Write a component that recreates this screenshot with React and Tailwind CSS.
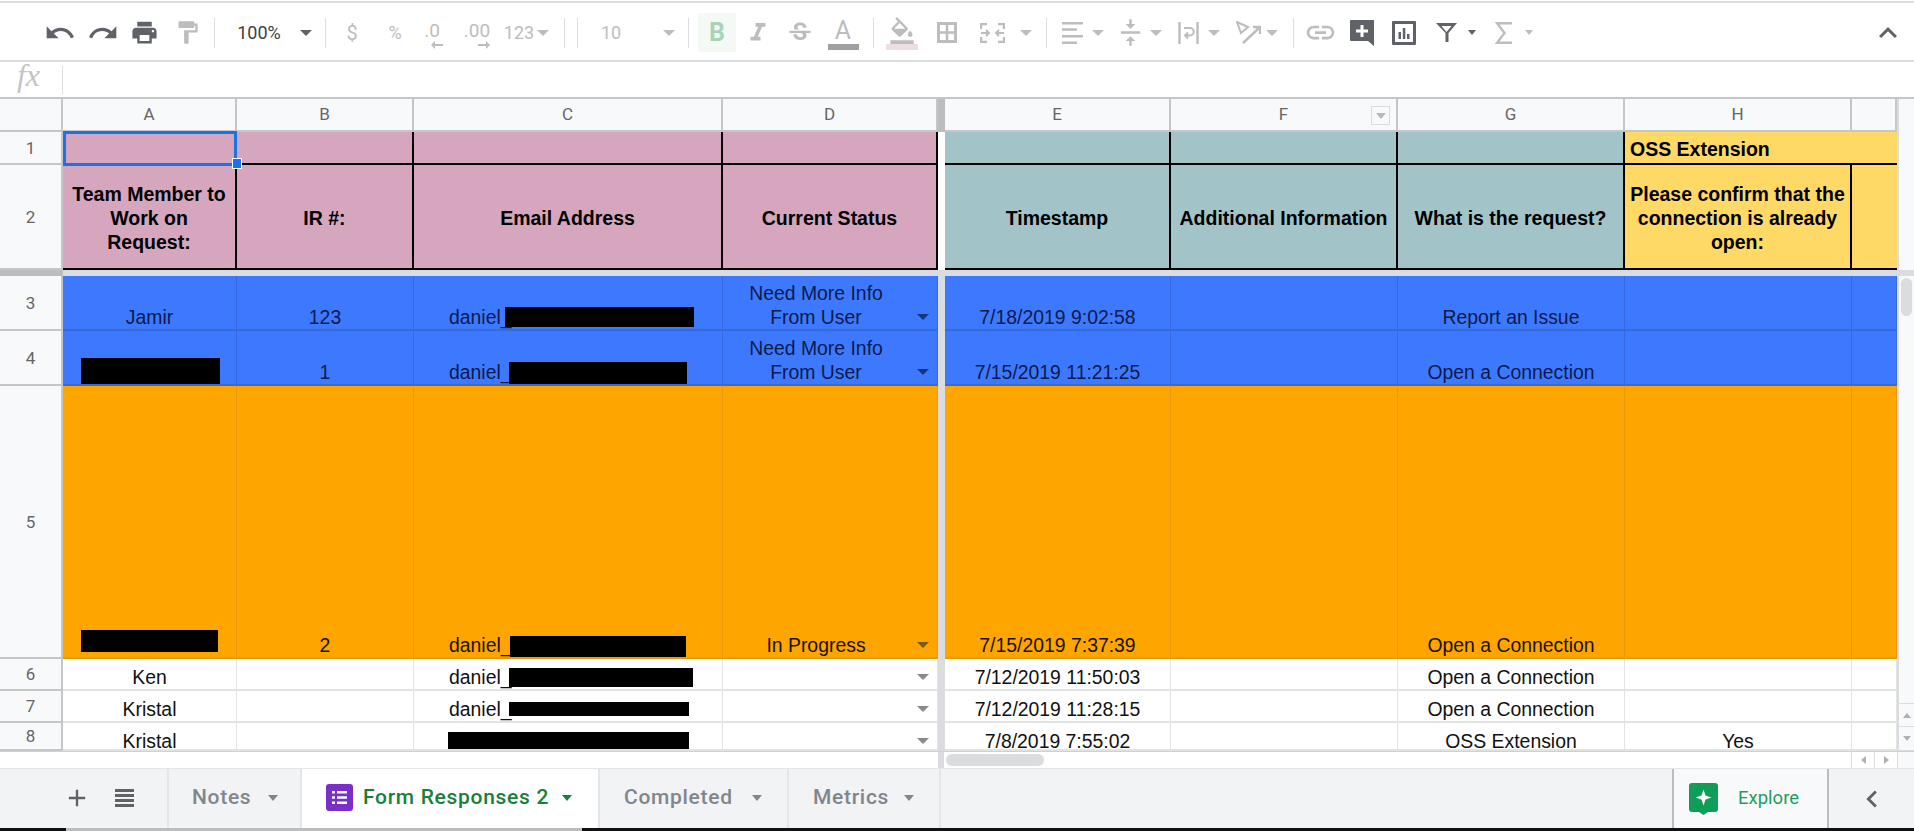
import React from 'react'
import {
  MdUndo, MdRedo, MdPrint, MdFormatPaint, MdFormatItalic, MdStrikethroughS, MdFormatColorFill,
  MdVerticalAlignCenter, MdLink, MdKeyboardArrowUp, MdAdd, MdChevronLeft,
} from 'react-icons/md'

const sq = 'flex items-center justify-center'

function Caret({ color = '#bdbdbd', size = 'border-x-[6px] border-t-[6px]' }) {
  return <span className={`inline-block w-0 h-0 border-x-transparent ${size}`} style={{ borderTopColor: color }} />
}

function Sep() {
  return <div className="w-px h-[30px] bg-[#dadce0]" />
}

function Arrow({ flip }) {
  return (
    <svg width="12" height="8" viewBox="0 0 12 8" className={flip ? 'rotate-180' : ''} fill="#bdbdbd">
      <path d="M0 4l4-4v3h8v2H4v3z" />
    </svg>
  )
}

function Head({ label, children }) {
  return (
    <div className={`relative ${sq} bg-[#f8f9fa] border-r-2 border-b-2 border-[#c4c6c8] text-[#666] text-[17px] font-['Roboto']`}>
      {label}
      {children}
    </div>
  )
}

function RowNum({ n }) {
  return <div className={`${sq} pt-[2px] bg-[#f8f9fa] border-r-2 border-b-2 border-[#c4c6c8] text-[#666] text-[17px] font-['Roboto']`}>{n}</div>
}

function HeaderCell({ bg, children }) {
  return (
    <div className={`${bg} border-r-2 border-b-2 border-black ${sq} pt-[2px] text-center font-bold text-[19.5px] leading-6 text-black`}>
      {children}
    </div>
  )
}

function Redact({ className }) {
  return <span className={`absolute bg-black ${className}`} />
}

const themes = {
  blue: { cell: 'bg-[#3d79ff] border-[#3669de] text-[#0c1a4d] items-end', caret: '#17357f' },
  orange: { cell: 'bg-[#ffa500] border-[#e69a0c] text-[#1a1200] items-end', caret: '#7a5a1c' },
  white: { cell: 'bg-white border-[#e2e3e3] text-[#111] items-start pt-[6px]', caret: '#8a8a8a' },
}

function DataRow({ n, theme, a, b, c, d, e, g, h, redactA, redactC, caretTop = 'self-end h-6' }) {
  const t = themes[theme]
  const cell = `relative flex justify-center text-center border-r border-b-2 text-[19.4px] leading-6 overflow-hidden ${t.cell}`
  return (
    <>
      <RowNum n={n} />
      <div className={cell}>{a}{redactA && <Redact className={redactA} />}</div>
      <div className={cell}>{b}</div>
      <div className={`${cell} !justify-start pl-[35px]`}>{c}{redactC && <Redact className={redactC} />}</div>
      <div className={`${cell} !justify-start`}>
        <span className="w-[186px]">{d}</span>
        <span className={`w-[28px] ${sq} ${caretTop}`}><Caret color={t.caret} /></span>
      </div>
      <div className="bg-[#dadce0]" />
      <div className={cell}>{e}</div>
      <div className={cell} />
      <div className={cell}>{g}</div>
      <div className={cell}>{h}</div>
      <div className={cell} />
    </>
  )
}

function Tab({ label, w, pl, gap }) {
  return (
    <div className={`${w} ${pl} ${gap} h-full flex items-center pb-[2px] border-r-2 border-[#e3e5e8] text-[21px] font-medium tracking-[0.7px] text-[#80868b] font-['Roboto']`}>
      {label}
      <Caret color="#80868b" size="border-x-[5px] border-t-[6px]" />
    </div>
  )
}

export default function App() {
  return (
    <div className="w-[1914px] h-[831px] overflow-hidden bg-white flex flex-col font-['Liberation_Sans',Arial,sans-serif]">
      <div className="h-px bg-white" />
      <div className="h-[2px] bg-[#dadce0]" />

      {/* toolbar */}
      <div className="h-[57px] flex items-center pl-[39px] pt-[2px] text-[#bdbdbd]">
        <div className={`w-[42px] ${sq} text-[#5f6368]`}><MdUndo size={32} /></div>
        <div className={`w-[43px] ${sq} text-[#5f6368]`}><MdRedo size={32} /></div>
        <div className={`w-[40px] ${sq} text-[#5f6368]`}><MdPrint size={29} /></div>
        <div className={`w-[46px] ${sq}`}><MdFormatPaint size={27} /></div>
        <div className="w-[4px]" />
        <Sep />
        <div className="w-[85px] pl-[3px] text-center text-[18px] text-[#3c4043] font-['Roboto']">100%</div>
        <div className={`w-[12px] ${sq}`}><Caret color="#5f6368" /></div>
        <div className="w-[13px]" />
        <Sep />
        <div className="w-[52px] text-center text-[20px] font-['Roboto']">$</div>
        <div className="w-[34px] text-center text-[18px] font-['Roboto']">%</div>
        <div className="w-[40px] flex flex-col items-center text-[19px] leading-[20px] font-['Roboto'] pt-[5px]">
          <span>.0</span>
          <span className="pl-[10px] h-[8px] flex"><Arrow /></span>
        </div>
        <div className="w-[50px] flex flex-col items-center text-[19px] leading-[20px] font-['Roboto'] pt-[5px]">
          <span>.00</span>
          <span className="pl-[14px] h-[8px] flex"><Arrow flip /></span>
        </div>
        <div className="w-[34px] text-center text-[18px] font-['Roboto']">123</div>
        <div className={`w-[14px] ${sq}`}><Caret /></div>
        <div className="w-[14px]" />
        <Sep />
        <div className="w-[12px]" />
        <Sep />
        <div className="w-[66px] text-center text-[18px] font-['Roboto']">10</div>
        <div className="w-[19px]" />
        <div className={`w-[12px] ${sq}`}><Caret /></div>
        <div className="w-[13px]" />
        <Sep />
        <div className="w-[9px]" />
        <div className={`w-[38px] h-[39px] bg-[#f4f9f5] ${sq} text-[#a8d5b5] text-[25px] font-bold font-['Roboto']`}>B</div>
        <div className={`w-[44px] ${sq}`}><MdFormatItalic size={30} /></div>
        <div className={`w-[40px] ${sq}`}><MdStrikethroughS size={28} /></div>
        <div className="w-[46px] flex flex-col items-center mt-[3px]">
          <span className="text-[25px] leading-[26px] font-['Roboto']">A</span>
          <span className="w-[31px] h-[6px] bg-[#a0a0a0]" />
        </div>
        <div className="w-[7px]" />
        <Sep />
        <div className="w-[56px] flex flex-col items-center mt-[3px]">
          <span className="h-[26px] flex items-center"><MdFormatColorFill size={28} /></span>
          <span className="w-[32px] h-[6px] bg-[#eedde4]" />
        </div>
        <div className={`w-[34px] ${sq}`}>
          <svg width="20" height="21" viewBox="0 0 20 21" fill="none" stroke="#bdbdbd" strokeWidth="3">
            <rect x="1.5" y="1.5" width="17" height="18" />
            <path d="M10 1v19M1 10.5h18" strokeWidth="2.5" />
          </svg>
        </div>
        <div className={`w-[56px] ${sq}`}>
          <svg width="25" height="20" viewBox="0 0 25 20" fill="none" stroke="#bdbdbd" strokeWidth="2.4">
            <path d="M1 6V1h6M18 1h6v5M1 14v5h6M18 19h6v-5" />
            <path d="M1 10h8M6 7l3 3-3 3M24 10h-8M19 7l-3 3 3 3" strokeWidth="2" />
          </svg>
        </div>
        <div className={`w-[12px] ${sq}`}><Caret /></div>
        <div className="w-[14px]" />
        <Sep />
        <div className="w-[5px]" />
        <div className={`w-[40px] ${sq}`}>
          <svg width="21" height="22" viewBox="0 0 21 22" fill="#bdbdbd">
            <path d="M0 0h21v2.6H0zM0 6.2h15v2.6H0zM0 13h21v2.6H0zM0 19.4h15V22H0z" />
          </svg>
        </div>
        <div className={`w-[12px] ${sq}`}><Caret /></div>
        <div className="w-[6px]" />
        <div className={`w-[40px] ${sq}`}><MdVerticalAlignCenter size={29} /></div>
        <div className={`w-[12px] ${sq}`}><Caret /></div>
        <div className="w-[6px]" />
        <div className={`w-[40px] ${sq}`}>
          <svg width="21" height="22" viewBox="0 0 21 22" fill="none" stroke="#bdbdbd" strokeWidth="2.4">
            <path d="M1.5 0v22M19.5 0v22" />
            <path d="M6 6h6a3 3 0 0 1 0 7.5H7.5M10 10.5l-3 3 3 3" strokeWidth="2" />
          </svg>
        </div>
        <div className={`w-[12px] ${sq}`}><Caret /></div>
        <div className="w-[10px]" />
        <div className={`w-[36px] ${sq}`}>
          <svg width="25" height="23" viewBox="0 0 25 23" fill="none" stroke="#bdbdbd" strokeWidth="2">
            <path d="M1 1l11 5-7 6z" />
            <path d="M7 22L23 7M17 6h7v7" strokeWidth="2.4" />
          </svg>
        </div>
        <div className={`w-[12px] ${sq}`}><Caret /></div>
        <div className="w-[15px]" />
        <Sep />
        <div className={`w-[52px] ${sq}`}><MdLink size={33} /></div>
        <div className={`w-[32px] ${sq}`}>
          <svg width="24" height="26" viewBox="0 0 24 26" fill="#5f6368">
            <path d="M1 0h23v26l-6-5H1a1 1 0 0 1-1-1V1a1 1 0 0 1 1-1z" />
            <path d="M10.5 5h3v4.500h4.500v3h-4.500V17h-3v-4.500H6v-3h4.500z" fill="#fff" />
          </svg>
        </div>
        <div className={`w-[52px] ${sq}`}>
          <svg width="24" height="24" viewBox="0 0 24 24" fill="#5f6368">
            <path fillRule="evenodd" d="M1 0h22a1 1 0 0 1 1 1v22a1 1 0 0 1-1 1H1a1 1 0 0 1-1-1V1a1 1 0 0 1 1-1zm2 3v18h18V3z" />
            <path d="M6.500 11h2.500v7H6.500zM10.800 7h2.500v11h-2.500zM15 13h2.500v5H15z" />
          </svg>
        </div>
        <div className={`w-[32px] ${sq}`}>
          <svg width="21" height="19" viewBox="0 0 21 19" fill="#5f6368">
            <path fillRule="evenodd" d="M0 0h21l-8.500 10v9h-3V10zM5.500 3l5 6 5-6z" />
          </svg>
        </div>
        <div className="w-[4px]" />
        <div className={`w-[12px] ${sq}`}><Caret color="#5f6368" size="border-x-[4px] border-t-[5px]" /></div>
        <div className="w-[2px]" />
        <div className={`w-[46px] ${sq}`}>
          <svg width="17" height="22" viewBox="0 0 17 22" fill="none" stroke="#bdbdbd" strokeWidth="2.4">
            <path d="M17 1.200H2l7.500 9.800L2 20.800h15" />
          </svg>
        </div>
        <div className={`w-[6px] ${sq}`}><Caret size="border-x-[4px] border-t-[5px]" /></div>
        <div className={`ml-auto mr-[6px] w-[40px] ${sq} text-[#5f6368]`}><MdKeyboardArrowUp size={36} /></div>
      </div>
      <div className="h-[2px] bg-[#dadce0]" />

      {/* formula bar */}
      <div className="h-[35px] flex items-center">
        <div className={`w-[63px] h-[28px] border-r border-[#dadce0] ${sq} pb-[9px] pr-[5px] text-[#c4c4c4] text-[32px] italic font-['Liberation_Serif']`}>fx</div>
      </div>
      <div className="h-[2px] bg-[#c4c6c8]" />

      {/* sheet */}
      <div className="h-[652px] flex">
        <div className="relative w-[1897px] grid grid-cols-[63px_174px_177px_309px_215px_7px_226px_227px_227px_227px_45px] grid-rows-[33px_33px_105px_6px_55px_55px_273px_32px_32px_28px]">
          <Head />
          <Head label="A" /><Head label="B" /><Head label="C" /><Head label="D" />
          <div className="bg-[#bdbdbd]" />
          <Head label="E" />
          <Head label="F">
            <span className={`absolute right-[6px] top-[7px] w-[19px] h-[19px] border border-[#dadce0] ${sq}`}>
              <Caret color="#b8b8b8" size="border-x-[5px] border-t-[6px]" />
            </span>
          </Head>
          <Head label="G" /><Head label="H" /><Head />

          <RowNum n="1" />
          <HeaderCell bg="bg-[#d5a6bd]" /><HeaderCell bg="bg-[#d5a6bd]" /><HeaderCell bg="bg-[#d5a6bd]" /><HeaderCell bg="bg-[#d5a6bd]" />
          <div className="bg-white" />
          <HeaderCell bg="bg-[#a2c4c9]" /><HeaderCell bg="bg-[#a2c4c9]" /><HeaderCell bg="bg-[#a2c4c9]" />
          <div className="col-span-2 bg-[#ffd966] border-b-2 border-black flex items-center pl-[5px] pt-[5px] font-bold text-[19.5px] text-black">OSS Extension</div>

          <RowNum n="2" />
          <HeaderCell bg="bg-[#d5a6bd]">Team Member to<br />Work on<br />Request:</HeaderCell>
          <HeaderCell bg="bg-[#d5a6bd]">IR #:</HeaderCell>
          <HeaderCell bg="bg-[#d5a6bd]">Email Address</HeaderCell>
          <HeaderCell bg="bg-[#d5a6bd]">Current Status</HeaderCell>
          <div className="bg-white" />
          <HeaderCell bg="bg-[#a2c4c9]">Timestamp</HeaderCell>
          <HeaderCell bg="bg-[#a2c4c9]">Additional Information</HeaderCell>
          <HeaderCell bg="bg-[#a2c4c9]">What is the request?</HeaderCell>
          <HeaderCell bg="bg-[#ffd966]">Please confirm that the<br />connection is already<br />open:</HeaderCell>
          <div className="bg-[#ffd966] border-b-2 border-black" />

          <div className="bg-[#bdbdbd]" />
          <div className="col-span-10 bg-[#dadce0]" />

          <DataRow n="3" theme="blue" a="Jamir" b="123" c="daniel_" d={<>Need More Info<br />From User</>} e="7/18/2019 9:02:58" g="Report an Issue"
            redactC="left-[91px] top-[31px] w-[189px] h-[20px]" />
          <DataRow n="4" theme="blue" b="1" c="daniel_" d={<>Need More Info<br />From User</>} e="7/15/2019 11:21:25" g="Open a Connection"
            redactA="left-[18px] top-[27px] w-[139px] h-[26px]" redactC="left-[95px] top-[31px] w-[178px] h-[22px]" />
          <DataRow n="5" theme="orange" b="2" c="daniel_" d="In Progress" e="7/15/2019 7:37:39" g="Open a Connection"
            redactA="left-[18px] top-[244px] w-[137px] h-[22px]" redactC="left-[96px] top-[250px] w-[176px] h-[23px]" />
          <DataRow n="6" theme="white" a="Ken" c="daniel_" e="7/12/2019 11:50:03" g="Open a Connection" caretTop="h-6"
            redactC="left-[95px] top-[9px] w-[184px] h-[19px]" />
          <DataRow n="7" theme="white" a="Kristal" c="daniel_" e="7/12/2019 11:28:15" g="Open a Connection" caretTop="h-6"
            redactC="left-[95px] top-[11px] w-[180px] h-[14px]" />
          <DataRow n="8" theme="white" a="Kristal" e="7/8/2019 7:55:02" g="OSS Extension" h="Yes" caretTop="h-6"
            redactC="left-[34px] top-[9px] w-[241px] h-[17px]" />

          {/* selected cell A1 */}
          <div className="absolute left-[63px] top-[32px] w-[174px] h-[35px] border-[3px] border-[#1a73e8]" />
          <div className="absolute left-[232px] top-[59px] w-[10px] h-[11px] bg-[#1a73e8] border border-white" />
        </div>

        {/* vertical scrollbar */}
        <div className="w-[17px] flex flex-col bg-[#f8f9fa] border-l-2 border-[#dadce0]">
          <div className="h-[171px]" />
          <div className="h-[6px] bg-[#dadce0]" />
          <div className="h-[38px] mx-[2px] mt-[2px] rounded-md bg-[#dadce0]" />
          <div className="flex-1" />
          <div className={`h-[24px] ${sq} border-y border-[#dadce0]`}><span className="w-0 h-0 border-x-[4px] border-b-[5px] border-x-transparent border-b-[#b0b0b0]" /></div>
          <div className={`h-[24px] ${sq} border-b border-[#dadce0]`}><Caret color="#b0b0b0" size="border-x-[4px] border-t-[5px]" /></div>
        </div>
      </div>

      {/* horizontal scrollbar */}
      <div className="h-[17px] flex bg-white border-t border-[#d0d0d0]">
        <div className="w-[938px]" />
        <div className="w-[6px] bg-[#dadce0]" />
        <div className="w-[2px]" />
        <div className="w-[98px] my-[2px] rounded-md bg-[#dadce0]" />
        <div className="flex-1" />
        <div className={`w-[23px] ${sq} border-l border-[#dadce0]`}><span className="w-0 h-0 border-y-[4px] border-r-[5px] border-y-transparent border-r-[#b0b0b0]" /></div>
        <div className={`w-[23px] ${sq} border-l border-[#dadce0]`}><span className="w-0 h-0 border-y-[4px] border-l-[5px] border-y-transparent border-l-[#b0b0b0]" /></div>
        <div className="w-[17px] bg-[#f8f9fa] border-l border-[#dadce0]" />
      </div>

      {/* tabs */}
      <div className="h-[60px] flex items-stretch bg-[#f1f3f4] border-t border-[#e3e5e8]">
        <div className="w-[169px] flex items-center border-r-2 border-[#e3e5e8] pl-[63px] pb-[2px] text-[#5f6368]">
          <MdAdd size={28} />
          <div className="ml-[24px] w-[19px] flex flex-col gap-[2px]">
            <span className="h-[3px] bg-[#5f6368]" /><span className="h-[3px] bg-[#5f6368]" />
            <span className="h-[3px] bg-[#5f6368]" /><span className="h-[3px] bg-[#5f6368]" />
          </div>
        </div>
        <Tab label="Notes" w="w-[133px]" pl="pl-[23px]" gap="gap-[17px]" />
        <div className="w-[298px] h-full bg-white flex items-center pl-[24px] pb-[2px] border-r-2 border-[#e3e5e8] text-[21px] font-medium tracking-[0.7px] text-[#188038] font-['Roboto']">
          <svg width="27" height="27" viewBox="0 0 27 27" className="mr-[10px] shrink-0">
            <rect width="27" height="27" rx="3" fill="#7b2fc9" />
            <path d="M6 7h3v2.500H6zM11 7h10v2.500H11zM6 12.200h3v2.500H6zM11 12.200h10v2.500H11zM6 17.500h3V20H6zM11 17.500h10V20H11z" fill="#fff" />
          </svg>
          Form Responses 2
          <span className="ml-[13px] flex"><Caret color="#188038" size="border-x-[5px] border-t-[6px]" /></span>
        </div>
        <Tab label="Completed" w="w-[189px]" pl="pl-[24px]" gap="gap-[19px]" />
        <Tab label="Metrics" w="w-[152px]" pl="pl-[24px]" gap="gap-[15px]" />
        <div className="flex-1" />
        <div className="w-[157px] bg-[#f8f9fa] border-x-2 border-[#bdbdbd] flex items-center pl-[15px] gap-[20px]">
          <svg width="29" height="32" viewBox="0 0 29 32">
            <path d="M3 0h23a3 3 0 0 1 3 3v23a3 3 0 0 1-3 3h-7l-4.500 3-4.500-3H3a3 3 0 0 1-3-3V3a3 3 0 0 1 3-3z" fill="#0f9d58" />
            <path d="M14.500 6.500l2 6 6 2-6 2-2 6-2-6-6-2 6-2z" fill="#fff" />
          </svg>
          <span className="text-[18.5px] text-[#1e9e63] font-['Roboto']">Explore</span>
        </div>
        <div className={`w-[85px] ${sq} text-[#5f6368]`}><MdChevronLeft size={34} /></div>
      </div>

      {/* window edge */}
      <div className="h-[3px] flex bg-[#111]">
        <div className="w-[66px]" />
        <div className="w-[516px] bg-[#bdbdbd]" />
      </div>
    </div>
  )
}
